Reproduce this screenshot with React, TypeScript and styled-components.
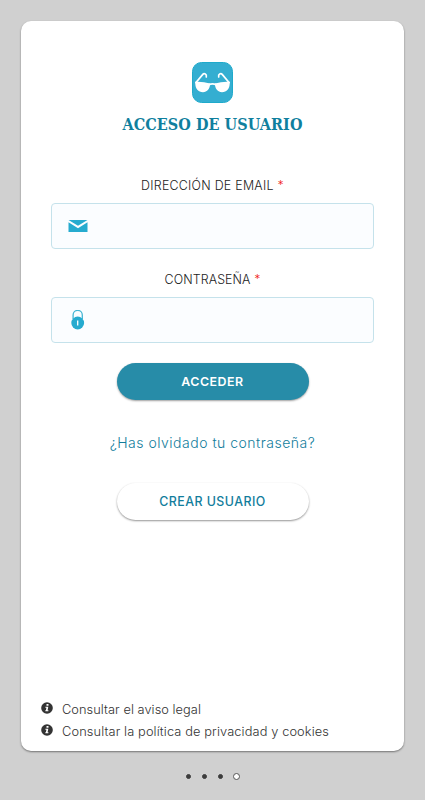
import React from 'react';
import styled, { createGlobalStyle } from 'styled-components';

const GlobalStyle = createGlobalStyle`
  * { box-sizing: border-box; }
  body { margin: 0; background: #d0d0d0; font-family: Inter, "Open Sans", sans-serif; }
`;

const Screen = styled.div`
  height: 800px;
  padding: 21px 21px 0 21px;
  display: flex;
  flex-direction: column;
  align-items: center;
  background: #d0d0d0;
  overflow: hidden;
`;

const Card = styled.main`
  width: 383px;
  height: 730px;
  flex: none;
  display: flex;
  flex-direction: column;
  align-items: center;
  padding: 41px 30px 0;
  background: #fff;
  border-radius: 10px;
  box-shadow: 0 1px 2px rgba(0, 0, 0, 0.45);
`;

const Logo = styled.svg`
  width: 41px;
  height: 41px;
  display: block;
  flex: none;
`;

const Title = styled.h1`
  margin: 11px 0 0;
  height: 22px;
  line-height: 22px;
  font-family: "DejaVu Serif Condensed", "DejaVu Serif", serif;
  font-size: 16px;
  font-weight: 700;
  font-stretch: condensed;
  letter-spacing: 0.07px;
  white-space: nowrap;
  color: #107f9e;
`;

const Form = styled.form`
  width: 323px;
  display: flex;
  flex-direction: column;
  align-items: center;
  margin-top: 39px;
`;

const Label = styled.label<{ $spacing: number }>`
  height: 18px;
  margin-top: 2px;
  line-height: 18px;
  font-size: 12.4px;
  font-weight: 300;
  letter-spacing: ${p => p.$spacing}px;
  color: #222;
  white-space: nowrap;
`;

const Required = styled.span`
  color: #f02020;
`;

const Field = styled.div`
  width: 323px;
  height: 46px;
  margin: 8px 0 20px;
  display: flex;
  align-items: center;
  padding-left: 16px;
  background: #fbfdff;
  border: 1px solid #c5e2eb;
  border-radius: 4px;
`;

const FieldIcon = styled.svg`
  width: 20px;
  height: 20px;
  flex: none;
`;

const Input = styled.input`
  flex: 1;
  min-width: 0;
  height: 100%;
  border: 0;
  outline: 0;
  padding: 0 12px;
  background: transparent;
`;

const Button = styled.button<{ $primary?: boolean; $spacing: number }>`
  width: 192px;
  height: 37px;
  flex: none;
  border: 0;
  padding: 0;
  border-radius: 19px;
  font-family: inherit;
  font-size: 12.4px;
  font-weight: ${p => (p.$primary ? 600 : 500)};
  letter-spacing: ${p => p.$spacing}px;
  color: ${p => (p.$primary ? '#fff' : '#127d9c')};
  background: ${p => (p.$primary ? '#278ca8' : '#fff')};
  box-shadow: 0 1px 2px rgba(0, 0, 0, ${p => (p.$primary ? 0.38 : 0.42)});
`;

const Forgot = styled.a`
  height: 22px;
  line-height: 22px;
  margin: 32px 0 29px;
  font-size: 14px;
  font-weight: 300;
  letter-spacing: 0.5px;
  color: #127d9c;
  white-space: nowrap;
`;

const Legal = styled.footer`
  align-self: flex-start;
  margin: auto 0 9px -10px;
`;

const LegalRow = styled.a`
  height: 22px;
  display: flex;
  align-items: center;
  gap: 9px;
`;

const InfoIcon = styled.svg`
  width: 12px;
  height: 12px;
  flex: none;
  margin-bottom: 3px;
`;

const LegalText = styled.span<{ $spacing: number }>`
  font-size: 12.8px;
  font-weight: 300;
  letter-spacing: ${p => p.$spacing}px;
  color: #333;
  white-space: nowrap;
`;

const Pager = styled.nav`
  display: flex;
  align-items: center;
  gap: 10px;
  height: 8px;
  margin-top: 21px;
`;

const Dot = styled.span<{ $active?: boolean }>`
  width: ${p => (p.$active ? 7 : 5)}px;
  height: ${p => (p.$active ? 7 : 5)}px;
  margin: 0 ${p => (p.$active ? -0.5 : 0.5)}px;
  border-radius: 50%;
  background: ${p => (p.$active ? '#fff' : '#3c3c3c')};
  border: 1px solid ${p => (p.$active ? '#555' : '#3c3c3c')};
`;

const Info = () => (
  <InfoIcon viewBox="0 0 12 12">
    <circle cx="6" cy="6" r="5.8" fill="#333" />
    <path d="M5.5 2h2v1.7h-2zM4.4 4.8h2.9L6.6 8.3h.8v1H4.3v-1h.6l.5-2.5h-1z" fill="#fff" />
  </InfoIcon>
);

export default function App() {
  return (
    <>
      <GlobalStyle />
      <Screen>
        <Card>
          <Logo viewBox="0 0 41 41">
            <rect x=".5" y=".5" width="40" height="40" rx="9" fill="#34aed1" stroke="#1faacb" />
            <g fill="none" stroke="#fff" strokeLinecap="round" strokeLinejoin="round">
              <path d="M4 20.5 10.6 12.6C12.2 10.7 15 12 14.3 15" strokeWidth="1.7" />
              <path d="M37 20.5 30.4 12.6C28.8 10.7 26 12 26.7 15" strokeWidth="1.7" />
              <path d="M17 22.5q3.5-1.2 7 0" strokeWidth="1.9" />
            </g>
            <path
              d="M3 19.8Q10.5 19.2 18 21.5C18.3 26.7 15 30.2 11 30.2C6.2 30.2 3.3 26.7 3.3 21.5ZM38 19.8Q30.5 19.2 23 21.5C22.7 26.7 26 30.2 30 30.2C34.8 30.2 37.7 26.7 37.7 21.5Z"
              fill="#fff"
            />
          </Logo>
          <Title>ACCESO DE USUARIO</Title>
          <Form onSubmit={e => e.preventDefault()}>
            <Label $spacing={0.26} htmlFor="email">DIRECCIÓN DE EMAIL <Required>*</Required></Label>
            <Field>
              <FieldIcon viewBox="0 0 20 20">
                <path d="M.5 4h19L10 9.8zM.5 6.2 10 12.2l9.5-6V16H.5z" fill="#26abcf" />
              </FieldIcon>
              <Input id="email" type="email" />
            </Field>
            <Label $spacing={0.12} htmlFor="password">CONTRASEÑA <Required>*</Required></Label>
            <Field>
              <FieldIcon viewBox="0 0 20 20">
                <path d="M5.1 9V5a4.6 4.6 0 0 1 9.2 0v4" fill="none" stroke="#45b6d4" strokeWidth="1.3" />
                <circle cx="9.7" cy="13" r="6.4" fill="#26abcf" />
                <path d="M9.7 10.5v5" stroke="#fff" strokeWidth="1.3" />
              </FieldIcon>
              <Input id="password" type="password" />
            </Field>
            <Button $primary $spacing={0.5} type="submit">ACCEDER</Button>
          </Form>
          <Forgot>¿Has olvidado tu contraseña?</Forgot>
          <Button $spacing={0.46} type="button">CREAR USUARIO</Button>
          <Legal>
            <LegalRow><Info /><LegalText $spacing={0.05}>Consultar el aviso legal</LegalText></LegalRow>
            <LegalRow><Info /><LegalText $spacing={0.12}>Consultar la política de privacidad y cookies</LegalText></LegalRow>
          </Legal>
        </Card>
        <Pager><Dot /><Dot /><Dot /><Dot $active /></Pager>
      </Screen>
    </>
  );
}
